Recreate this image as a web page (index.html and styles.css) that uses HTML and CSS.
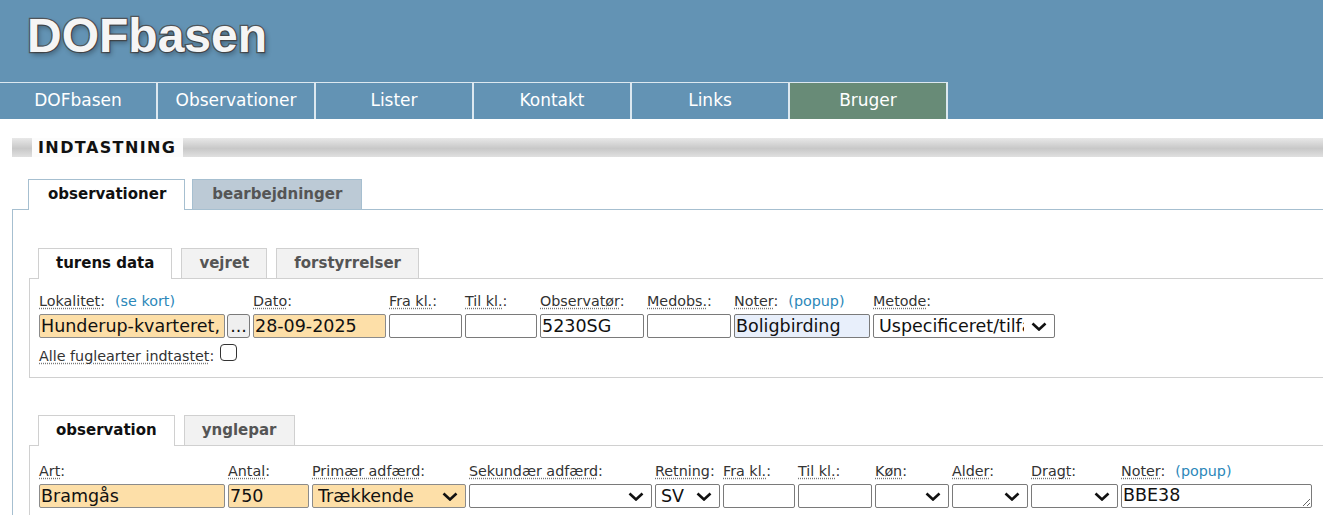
FILE: index.html
```html
<!DOCTYPE html>
<html lang="da">
<head>
    <meta charset="UTF-8">
    <title>DOFbasen - Indtastning</title>
    <link rel="stylesheet" href="styles.css">
</head>
<body>
    <header class="top">
        <div class="logo">DOFbasen</div>
        <ul class="menu">
            <li><a href="#">DOFbasen</a></li>
            <li><a href="#">Observationer</a></li>
            <li><a href="#">Lister</a></li>
            <li><a href="#">Kontakt</a></li>
            <li><a href="#">Links</a></li>
            <li class="current"><a href="#">Bruger</a></li>
        </ul>
    </header>

    <div class="content">
        <div class="section-title"><span>INDTASTNING</span></div>

        <div class="tabs main-tabs">
            <div class="tab selected">observationer</div>
            <div class="tab">bearbejdninger</div>
        </div>

        <div class="panel">
            <!-- turens data -->
            <div class="tabs sub-tabs">
                <div class="tab selected">turens data</div>
                <div class="tab">vejret</div>
                <div class="tab">forstyrrelser</div>
            </div>
            <div class="subpanel">
                <div class="fields">
                    <div class="field f-lok">
                        <div class="lbl"><span class="u">Lokalitet</span>:<a class="pop" href="#">(se kort)</a></div>
                        <div class="lok-ctrl">
                            <input class="req w-lok" type="text" value="Hunderup-kvarteret, Odense">
                            <button class="dots">...</button>
                        </div>
                    </div>
                    <div class="field w-dato">
                        <div class="lbl"><span class="u">Dato</span>:</div>
                        <input class="req" type="text" value="28-09-2025">
                    </div>
                    <div class="field w-fra">
                        <div class="lbl"><span class="u">Fra kl.</span>:</div>
                        <input type="text">
                    </div>
                    <div class="field w-til">
                        <div class="lbl"><span class="u">Til kl.</span>:</div>
                        <input type="text">
                    </div>
                    <div class="field w-obs">
                        <div class="lbl"><span class="u">Observatør</span>:</div>
                        <input type="text" value="5230SG">
                    </div>
                    <div class="field w-medobs">
                        <div class="lbl"><span class="u">Medobs.</span>:</div>
                        <input type="text">
                    </div>
                    <div class="field w-noter">
                        <div class="lbl"><span class="u">Noter</span>:<a class="pop" href="#">(popup)</a></div>
                        <input class="note" type="text" value="Boligbirding">
                    </div>
                    <div class="field w-metode">
                        <div class="lbl"><span class="u">Metode</span>:</div>
                        <div class="sel">
                            <select><option>Uspecificeret/tilfældig</option></select>
                            <svg class="chev" viewBox="0 0 16 9"><path d="M1.5 1.5 L8 7.5 L14.5 1.5" /></svg>
                        </div>
                    </div>
                </div>
                <div class="check-row">
                    <span class="u">Alle fuglearter indtastet</span>:<input class="check" type="checkbox">
                </div>
            </div>

            <!-- observation -->
            <div class="tabs sub-tabs obs-tabs">
                <div class="tab selected">observation</div>
                <div class="tab">ynglepar</div>
            </div>
            <div class="subpanel obs-panel">
                <div class="fields">
                    <div class="field w-art">
                        <div class="lbl"><span class="u">Art</span>:</div>
                        <input class="req" type="text" value="Bramgås">
                    </div>
                    <div class="field w-antal">
                        <div class="lbl"><span class="u">Antal</span>:</div>
                        <input class="req" type="text" value="750">
                    </div>
                    <div class="field w-prim">
                        <div class="lbl"><span class="u">Primær adfærd</span>:</div>
                        <div class="sel">
                            <select class="req"><option>Trækkende</option></select>
                            <svg class="chev" viewBox="0 0 16 9"><path d="M1.5 1.5 L8 7.5 L14.5 1.5" /></svg>
                        </div>
                    </div>
                    <div class="field w-sek">
                        <div class="lbl"><span class="u">Sekundær adfærd</span>:</div>
                        <div class="sel">
                            <select><option></option></select>
                            <svg class="chev" viewBox="0 0 16 9"><path d="M1.5 1.5 L8 7.5 L14.5 1.5" /></svg>
                        </div>
                    </div>
                    <div class="field w-ret">
                        <div class="lbl"><span class="u">Retning</span>:</div>
                        <div class="sel">
                            <select><option>SV</option></select>
                            <svg class="chev" viewBox="0 0 16 9"><path d="M1.5 1.5 L8 7.5 L14.5 1.5" /></svg>
                        </div>
                    </div>
                    <div class="field w-fra2">
                        <div class="lbl"><span class="u">Fra kl.</span>:</div>
                        <input type="text">
                    </div>
                    <div class="field w-til2">
                        <div class="lbl"><span class="u">Til kl.</span>:</div>
                        <input type="text">
                    </div>
                    <div class="field w-kon">
                        <div class="lbl"><span class="u">Køn</span>:</div>
                        <div class="sel">
                            <select><option></option></select>
                            <svg class="chev" viewBox="0 0 16 9"><path d="M1.5 1.5 L8 7.5 L14.5 1.5" /></svg>
                        </div>
                    </div>
                    <div class="field w-alder">
                        <div class="lbl"><span class="u">Alder</span>:</div>
                        <div class="sel">
                            <select><option></option></select>
                            <svg class="chev" viewBox="0 0 16 9"><path d="M1.5 1.5 L8 7.5 L14.5 1.5" /></svg>
                        </div>
                    </div>
                    <div class="field w-dragt">
                        <div class="lbl"><span class="u">Dragt</span>:</div>
                        <div class="sel">
                            <select><option></option></select>
                            <svg class="chev" viewBox="0 0 16 9"><path d="M1.5 1.5 L8 7.5 L14.5 1.5" /></svg>
                        </div>
                    </div>
                    <div class="field w-noter2">
                        <div class="lbl"><span class="u">Noter</span>:<a class="pop" href="#">(popup)</a></div>
                        <textarea rows="1">BBE38</textarea>
                    </div>
                </div>
            </div>
        </div>
    </div>
</body>
</html>
```

FILE: styles.css
```css
body {
    margin: 0;
    font-family: 'DejaVu Sans', Verdana, sans-serif;
    color: #333;
    background-color: #fff;
    overflow: hidden;
}

/* header */

.top {
    background-color: #6393b4;
}

.logo {
    padding: 12px 0 22px 27px;
    height: 48px;
    font-family: 'Liberation Sans', Arial, sans-serif;
    font-weight: bold;
    font-size: 48px;
    line-height: 48px;
    color: #f5f5f5;
    -webkit-text-stroke: 2.5px #51575c;
    paint-order: stroke fill;
    text-shadow: 2px 3px 5px rgba(0, 0, 0, 0.3);
}

.menu {
    display: flex;
    list-style: none;
    margin: 0;
    padding: 0;
    width: 948px;
    border-top: 1px solid #dce8f0;
}

.menu li {
    width: 156px;
    border-right: 2px solid #dce8f0;
}

.menu li a {
    display: block;
    height: 36px;
    line-height: 35px;
    text-align: center;
    color: #fff;
    text-decoration: none;
    font-size: 17px;
}

.menu li.current {
    background-color: #688b77;
}

/* content */

.content {
    padding: 19px 0 0 12px;
}

.section-title {
    height: 19px;
    background: linear-gradient(#e8e8e8, #c8c8c8 55%, #e0e0e0);
}

.section-title span {
    display: inline-block;
    margin-left: 20px;
    padding: 0 7px 0 6px;
    background-color: #fcfcfc;
    font-weight: bold;
    font-size: 16px;
    letter-spacing: 1.4px;
    line-height: 19px;
    color: #111;
}

.tabs {
    display: flex;
    align-items: flex-end;
}

.tab {
    height: 29px;
    line-height: 29px;
    padding: 0 17px;
    font-weight: bold;
    font-size: 15px;
    color: #555;
    border: 1px solid;
    border-bottom: none;
}

.tab.selected {
    position: relative;
    height: 30px;
    margin-bottom: -1px;
    background-color: #fff;
    color: #111;
}

.main-tabs {
    margin-top: 22px;
    padding-left: 16px;
    gap: 7px;
}

.main-tabs .tab {
    padding: 0 19px;
    background-color: #bccad6;
    border-color: #a6bfd0;
}

.main-tabs .tab.selected {
    padding: 0 18px 0 19px;
    background-color: #fff;
}

.panel {
    border-top: 1px solid #a6bfd0;
    border-left: 1px solid #a6bfd0;
    padding: 38px 0 0 16px;
}

.sub-tabs {
    padding-left: 9px;
    gap: 9px;
}

.sub-tabs .tab {
    background-color: #f2f2f2;
    border-color: #d0d0d0;
}

.sub-tabs .tab.selected {
    background-color: #fff;
}

.subpanel {
    border-top: 1px solid #d0d0d0;
    border-left: 1px solid #d0d0d0;
    border-bottom: 1px solid #d0d0d0;
    padding: 12px 9px 13px;
}

.obs-tabs {
    margin-top: 37px;
}

.obs-panel {
    padding-top: 15px;
}

/* fields */

.fields {
    display: flex;
    gap: 3px;
}

.field {
    flex: none;
}

.lbl {
    height: 20px;
    line-height: 20px;
    margin-bottom: 3px;
    font-size: 14.3px;
    white-space: nowrap;
}

.u {
    text-decoration: underline dotted #777;
    text-underline-offset: 2px;
}

.pop {
    margin-left: 10px;
    color: #2b87b9;
    text-decoration: none;
}

input[type="text"],
select,
textarea,
.dots {
    box-sizing: border-box;
    width: 100%;
    height: 24px;
    margin: 0;
    padding: 0 1px;
    font-family: 'DejaVu Sans', Verdana, sans-serif;
    font-size: 17.5px;
    color: #111;
    background-color: #fff;
    border: 1px solid #7a7a7a;
    border-radius: 2px;
    outline: none;
}

input.req,
select.req {
    background-color: #fddfa8;
    border-color: #8b8b8b;
}

input.note {
    background-color: #e8effb;
}

.lok-ctrl {
    display: flex;
    gap: 2px;
}

.w-lok {
    flex: none;
    width: 186px !important;
}

.dots {
    width: 23px;
    padding: 0;
    line-height: 18px;
    background-color: #efefef;
    border-radius: 3px;
}

.sel {
    position: relative;
}

select {
    appearance: none;
    padding: 0 30px 0 5px;
}

.chev {
    position: absolute;
    right: 8px;
    top: 8px;
    width: 16px;
    height: 9px;
    pointer-events: none;
}

.chev path {
    fill: none;
    stroke: #111;
    stroke-width: 2.6;
}

textarea {
    overflow: hidden;
    line-height: 21px;
    resize: both;
}

.check-row {
    display: flex;
    align-items: flex-end;
    height: 20px;
    margin-top: 6px;
    font-size: 14.3px;
}

.check {
    appearance: none;
    width: 17px;
    height: 17px;
    margin: 0 0 3px 6px;
    border: 1.5px solid #333;
    border-radius: 4px;
    background-color: #fff;
}

/* field widths, row 1 */
.f-lok { width: 211px; }
.w-dato { width: 133px; }
.w-fra { width: 73px; }
.w-til { width: 72px; }
.w-obs { width: 104px; }
.w-medobs { width: 84px; }
.w-noter { width: 136px; }
.w-metode { width: 182px; }

/* field widths, row 2 */
.w-art { width: 186px; }
.w-antal { width: 81px; }
.w-prim { width: 154px; }
.w-sek { width: 183px; }
.w-ret { width: 65px; }
.w-fra2 { width: 72px; }
.w-til2 { width: 74px; }
.w-kon { width: 74px; }
.w-alder { width: 76px; }
.w-dragt { width: 87px; }
.w-noter2 { width: 191px; }
```
